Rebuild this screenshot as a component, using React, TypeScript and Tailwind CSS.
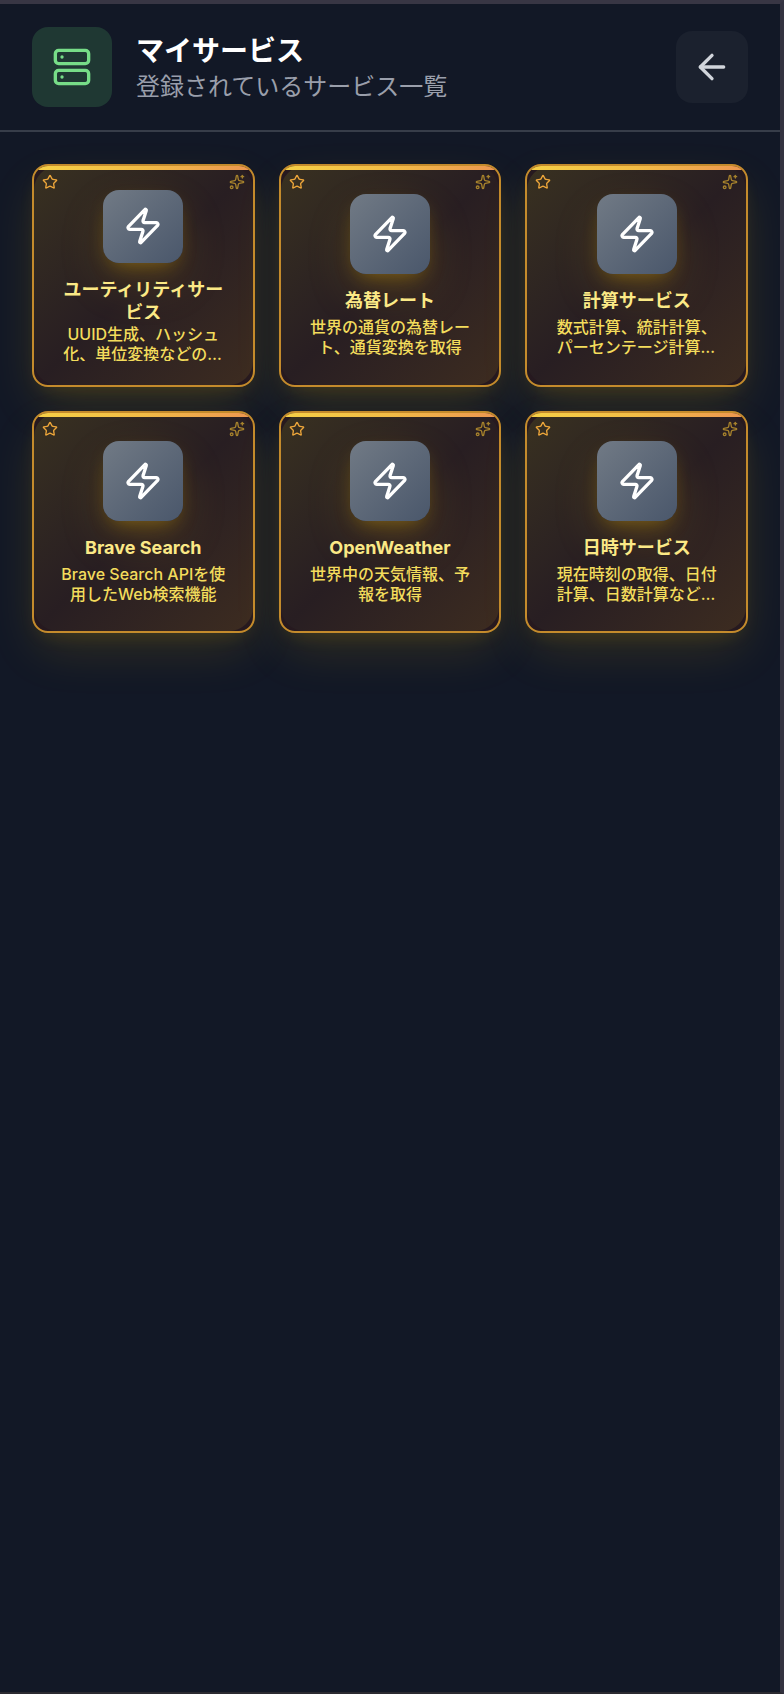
import { ArrowLeft, Server, Sparkles, Star, Zap } from "lucide-react";

type Service = { name: string; description: string };

const services: Service[] = [
  {
    name: "ユーティリティサービス",
    description: "UUID生成、ハッシュ化、単位変換などのユーティリティ機能",
  },
  { name: "為替レート", description: "世界の通貨の為替レート、通貨変換を取得" },
  {
    name: "計算サービス",
    description: "数式計算、統計計算、パーセンテージ計算などの計算機能",
  },
  { name: "Brave Search", description: "Brave Search APIを使用したWeb検索機能" },
  { name: "OpenWeather", description: "世界中の天気情報、予報を取得" },
  {
    name: "日時サービス",
    description: "現在時刻の取得、日付計算、日数計算などの日時機能",
  },
];

function Header() {
  return (
    <header className="flex items-center justify-between border-b-2 border-[#373d49] px-8 py-[23px]">
      <div className="flex items-center gap-6">
        <div className="flex size-20 items-center justify-center rounded-2xl bg-[#1f3833] text-[#77dd88]">
          <Server className="size-10" />
        </div>
        <div>
          <h1 className="text-[28px] leading-10 font-bold text-white">マイサービス</h1>
          <p className="text-2xl leading-8 text-[#9a9fab]">登録されているサービス一覧</p>
        </div>
      </div>
      <button
        type="button"
        aria-label="戻る"
        className="flex size-[72px] items-center justify-center rounded-2xl bg-[#1b212e] text-[#d1d5db]"
      >
        <ArrowLeft className="size-10" />
      </button>
    </header>
  );
}

function ServiceCard({ name, description }: Service) {
  return (
    <button
      type="button"
      className="relative flex aspect-square min-w-0 flex-col items-center justify-center overflow-hidden rounded-2xl border-2 border-[#c48b2c] bg-[#26191f] p-6 text-center shadow-[0_20px_50px_-6px_rgba(234,179,8,0.16),0_8px_20px_-8px_rgba(234,179,8,0.16)]"
    >
      <span className="absolute inset-0 rounded-3xl bg-linear-to-br from-[#393120] via-[#281e22] to-[#3d2c20]" />
      <span className="absolute inset-x-0 top-0 h-1 bg-linear-to-r from-[#f6d046] via-[#f2bc46] to-[#ec9650]" />
      <Star className="absolute top-2 left-2 size-4 text-[#eda63a]" />
      <Sparkles className="absolute top-2 right-2 size-4 text-[#a5812c]" />
      <span className="relative mb-[15px] flex h-20 w-20 items-center justify-center rounded-2xl bg-linear-to-br from-[#717a85] to-[#4a576b] text-white shadow-[0_20px_50px_-6px_rgba(234,179,8,0.22),0_8px_20px_-8px_rgba(234,179,8,0.4)]">
        <Zap className="size-10" />
      </span>
      <span className="relative mb-[5px] line-clamp-2 min-h-0 text-lg leading-[23px] font-bold text-[#fbe986]">
        {name}
      </span>
      <span className="relative line-clamp-2 min-h-0 text-base leading-5 font-medium text-[#f3dc5c]">
        {description}
      </span>
    </button>
  );
}

export default function App() {
  return (
    <div className="min-h-screen border-t-4 border-r-4 border-b-2 border-t-[#383644] border-r-[#333240] border-b-[#2b2a30] bg-[#121826] font-[Inter,'Noto_Sans_CJK_JP',sans-serif]">
      <Header />
      <main className="grid grid-cols-3 gap-6 p-8">
        {services.map((service) => (
          <ServiceCard key={service.name} {...service} />
        ))}
      </main>
    </div>
  );
}
